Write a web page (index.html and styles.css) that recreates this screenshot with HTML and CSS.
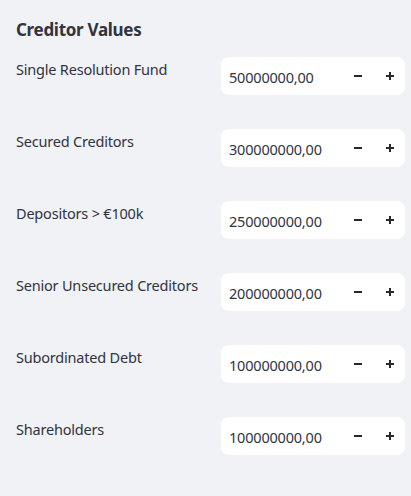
FILE: index.html
```html
<!DOCTYPE html>
<html>
<head>
<meta charset="utf-8">
<link rel="stylesheet" href="styles.css">
</head>
<body>
<section class="sidebar">
  <h3 class="title">Creditor Values</h3>
  <div class="rows">
    <div class="row"><label class="label">Single Resolution Fund</label><div class="input"><span class="value">50000000,00</span><span class="btn minus"></span><span class="btn plus"></span></div></div>
    <div class="row"><label class="label">Secured Creditors</label><div class="input"><span class="value">300000000,00</span><span class="btn minus"></span><span class="btn plus"></span></div></div>
    <div class="row"><label class="label">Depositors &gt; €100k</label><div class="input"><span class="value">250000000,00</span><span class="btn minus"></span><span class="btn plus"></span></div></div>
    <div class="row"><label class="label">Senior Unsecured Creditors</label><div class="input"><span class="value">200000000,00</span><span class="btn minus"></span><span class="btn plus"></span></div></div>
    <div class="row"><label class="label">Subordinated Debt</label><div class="input"><span class="value">100000000,00</span><span class="btn minus"></span><span class="btn plus"></span></div></div>
    <div class="row"><label class="label">Shareholders</label><div class="input"><span class="value">100000000,00</span><span class="btn minus"></span><span class="btn plus"></span></div></div>
  </div>
</section>
</body>
</html>
```
FILE: styles.css
```css
html, body {
  margin: 0;
  padding: 0;
  background: #f0f2f6;
}
body {
  font-family: "Noto Sans", "Open Sans", sans-serif;
  color: #31333f;
  width: 411px;
  height: 496px;
  overflow: hidden;
}
.sidebar {
  padding: 19px 6px 0 16px;
}
.title {
  margin: 0;
  font-size: 17px;
  font-weight: 700;
  line-height: 22px;
  letter-spacing: -0.3px;
}
.rows {
  margin-top: 16px;
  display: flex;
  flex-direction: column;
  gap: 34px;
}
.row {
  display: grid;
  grid-template-columns: 1fr 184px;
  column-gap: 16px;
  align-items: start;
}
.label {
  font-size: 14.5px;
  line-height: 20px;
  letter-spacing: -0.2px;
  padding-top: 2px;
}
.input {
  height: 38px;
  background: #ffffff;
  border-radius: 8px;
  display: flex;
  align-items: center;
  padding-left: 8px;
}
.value {
  flex: 1;
  font-size: 14.5px;
  letter-spacing: -0.2px;
  padding-top: 1px;
}
.btn {
  position: relative;
  width: 32px;
  height: 38px;
  flex: none;
}
.btn::before, .plus::after {
  content: "";
  position: absolute;
  left: 13px;
  top: 18px;
  width: 8px;
  height: 2px;
  background: #262730;
}
.plus::after {
  left: 16px;
  top: 15px;
  width: 2px;
  height: 8px;
}
```
